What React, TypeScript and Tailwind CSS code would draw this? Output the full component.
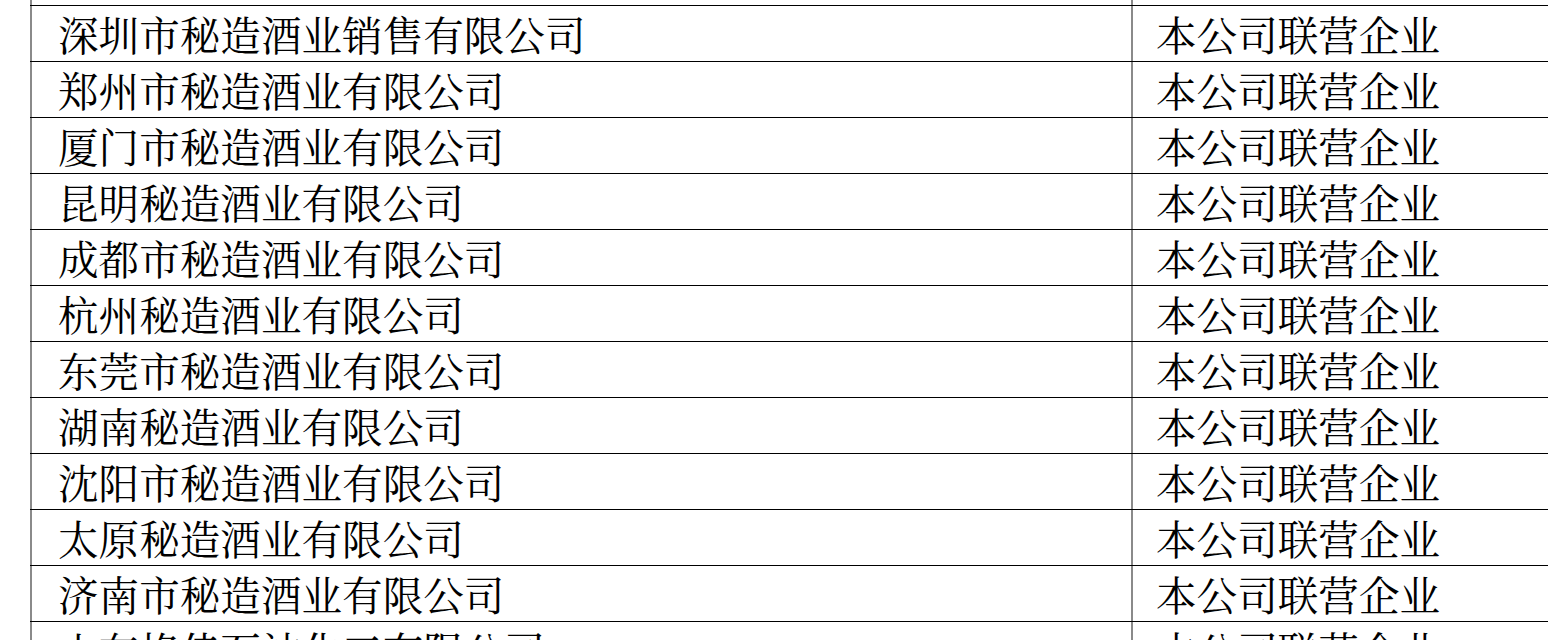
const rows: [string, string][] = [
  ['', ''],
  ['深圳市秘造酒业销售有限公司', '本公司联营企业'],
  ['郑州市秘造酒业有限公司', '本公司联营企业'],
  ['厦门市秘造酒业有限公司', '本公司联营企业'],
  ['昆明秘造酒业有限公司', '本公司联营企业'],
  ['成都市秘造酒业有限公司', '本公司联营企业'],
  ['杭州秘造酒业有限公司', '本公司联营企业'],
  ['东莞市秘造酒业有限公司', '本公司联营企业'],
  ['湖南秘造酒业有限公司', '本公司联营企业'],
  ['沈阳市秘造酒业有限公司', '本公司联营企业'],
  ['太原秘造酒业有限公司', '本公司联营企业'],
  ['济南市秘造酒业有限公司', '本公司联营企业'],
  ['山东格佳石油化工有限公司', '本公司联营企业'],
];

export default function App() {
  return (
    <div className="h-[640px] w-[1548px] overflow-hidden bg-white font-['Noto_Serif_CJK_SC','Noto_Sans_CJK_SC',serif] text-[40.6px] leading-none text-black">
      <div className="-mt-[50px] w-[1700px] pl-[30px]">
        {rows.map(([name, relation], i) => (
          <div key={i} className="flex h-[56px] border-b border-black">
            <div className="flex w-[1101px] shrink-0 items-center border-l-2 border-[#8a8a8a] pl-[26px] pt-[2px]">
              {name}
            </div>
            <div className="flex flex-1 items-center border-l-2 border-[#8a8a8a] pl-[23px] pt-[2px]">
              {relation}
            </div>
          </div>
        ))}
      </div>
    </div>
  );
}
